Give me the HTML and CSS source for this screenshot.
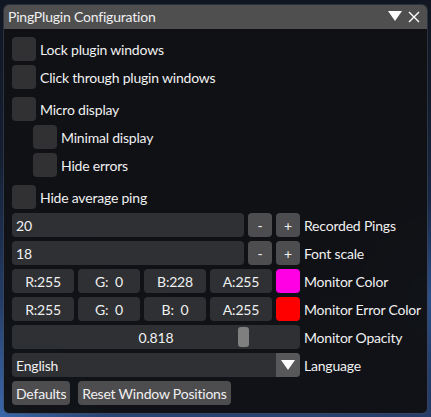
FILE: index.html
```html
<!DOCTYPE html>
<html>
<head>
<meta charset="utf-8">
<link rel="stylesheet" href="styles.css">
</head>
<body>
<div class="win">
  <div class="title">
    <span class="title-text">PingPlugin Configuration</span>
    <div class="tools">
      <svg class="tri" width="14" height="10" viewBox="0 0 14 10"><polygon points="0,0 14,0 7,10" fill="#fff"/></svg>
      <svg class="close" width="12" height="12" viewBox="0 0 12 12"><path d="M1 1 L11 11 M11 1 L1 11" stroke="#fff" stroke-width="1.4" fill="none"/></svg>
    </div>
  </div>
  <div class="content">
    <div class="cb"><span class="box"></span>Lock plugin windows</div>
    <div class="cb"><span class="box"></span>Click through plugin windows</div>
    <div class="cb sp"><span class="box"></span>Micro display</div>
    <div class="cb indent"><span class="box"></span>Minimal display</div>
    <div class="cb indent"><span class="box"></span>Hide errors</div>
    <div class="cb sp"><span class="box"></span>Hide average ping</div>

    <div class="row">
      <div class="ctrl">
        <div class="field grow">20</div>
        <div class="btn sq">-</div>
        <div class="btn sq">+</div>
      </div>
      <span class="lbl">Recorded Pings</span>
    </div>
    <div class="row">
      <div class="ctrl">
        <div class="field grow">18</div>
        <div class="btn sq">-</div>
        <div class="btn sq">+</div>
      </div>
      <span class="lbl">Font scale</span>
    </div>
    <div class="row">
      <div class="ctrl">
        <div class="field ch">R:255</div>
        <div class="field ch">G:  0</div>
        <div class="field ch">B:228</div>
        <div class="field ch">A:255</div>
        <div class="swatch magenta"></div>
      </div>
      <span class="lbl">Monitor Color</span>
    </div>
    <div class="row">
      <div class="ctrl">
        <div class="field ch">R:255</div>
        <div class="field ch">G:  0</div>
        <div class="field ch">B:  0</div>
        <div class="field ch">A:255</div>
        <div class="swatch red"></div>
      </div>
      <span class="lbl">Monitor Error Color</span>
    </div>
    <div class="row">
      <div class="ctrl">
        <div class="field slider grow">
          <span>0.818</span>
          <span class="grab"></span>
        </div>
      </div>
      <span class="lbl">Monitor Opacity</span>
    </div>
    <div class="row">
      <div class="ctrl">
        <div class="field combo grow">
          <span class="combo-text">English</span>
          <span class="arrow"><svg width="14" height="10" viewBox="0 0 14 10"><polygon points="0,0 14,0 7,10" fill="#fff"/></svg></span>
        </div>
      </div>
      <span class="lbl">Language</span>
    </div>
    <div class="btnrow">
      <div class="btn pad">Defaults</div>
      <div class="btn pad">Reset Window Positions</div>
    </div>
  </div>
</div>
</body>
</html>
```

FILE: styles.css
```css
html, body {
  margin: 0;
  padding: 0;
}
body {
  width: 431px;
  height: 417px;
  overflow: hidden;
  font-family: "Lato", "Noto Sans", sans-serif;
  font-size: 14px;
  letter-spacing: -0.2px;
  color: #f0f0f1;
  background:
    radial-gradient(ellipse 220px 260px at 0px 417px, #3a66a8 0%, rgba(40,70,120,0.6) 45%, rgba(20,30,50,0) 100%),
    radial-gradient(ellipse 160px 200px at 431px 300px, #2d4f86 0%, rgba(30,50,90,0.4) 50%, rgba(20,30,50,0) 100%),
    linear-gradient(180deg, #111722 0%, #16233a 60%, #2a4470 100%);
}
.win {
  margin: 5px 0 0 4px;
  width: 423px;
  height: 408px;
  background: rgba(16, 17, 20, 0.96);
  border-radius: 5px;
  box-shadow: 0 0 0 1px rgba(70, 75, 85, 0.5);
  overflow: hidden;
}
.title {
  height: 24px;
  background: #4f4f50;
  display: flex;
  align-items: center;
  justify-content: space-between;
  padding: 0 7px 0 4px;
}
.title-text {
  line-height: 24px;
}
.tools {
  display: flex;
  align-items: center;
  gap: 6px;
}
.tri {
  display: block;
  margin-top: -2px;
}
.close {
  display: block;
}
.content {
  padding: 8px;
  display: flex;
  flex-direction: column;
  gap: 4px;
}
.cb {
  display: flex;
  align-items: center;
  gap: 4px;
  height: 24px;
}
.box {
  width: 24px;
  height: 24px;
  border-radius: 4px;
  background: #313134;
  flex: none;
}
.indent {
  margin-left: 21px;
}
.sp {
  margin-top: 4px;
}
.row {
  display: flex;
  align-items: center;
  gap: 4px;
  height: 24px;
}
.ctrl {
  width: 288px;
  height: 24px;
  display: flex;
  gap: 4px;
  flex: none;
}
.field {
  height: 24px;
  background: #2f3033;
  border-radius: 4px;
  display: flex;
  align-items: center;
  padding: 0 4px;
  box-sizing: border-box;
  white-space: pre;
}
.grow {
  flex: 1;
}
.ch {
  width: 62px;
  justify-content: center;
  flex: none;
}
.btn {
  height: 24px;
  background: #4d4d4f;
  border-radius: 4px;
  display: flex;
  align-items: center;
  justify-content: center;
  box-sizing: border-box;
}
.sq {
  width: 24px;
  flex: none;
}
.pad {
  padding: 0 4px;
}
.swatch {
  width: 24px;
  height: 24px;
  border-radius: 4px;
  flex: none;
}
.magenta {
  background: #ff00e4;
}
.red {
  background: #ff0000;
}
.slider {
  position: relative;
  justify-content: center;
}
.grab {
  position: absolute;
  left: 226px;
  top: 2px;
  width: 11px;
  height: 20px;
  border-radius: 3px;
  background: #7f7f80;
}
.combo {
  padding: 0 0 0 4px;
  overflow: hidden;
}
.combo-text {
  flex: 1;
}
.arrow {
  width: 24px;
  height: 24px;
  background: #58585a;
  display: flex;
  align-items: center;
  justify-content: center;
}
.arrow svg {
  display: block;
}
.lbl {
  white-space: nowrap;
}
.btnrow {
  display: flex;
  gap: 8px;
  height: 24px;
}
```
